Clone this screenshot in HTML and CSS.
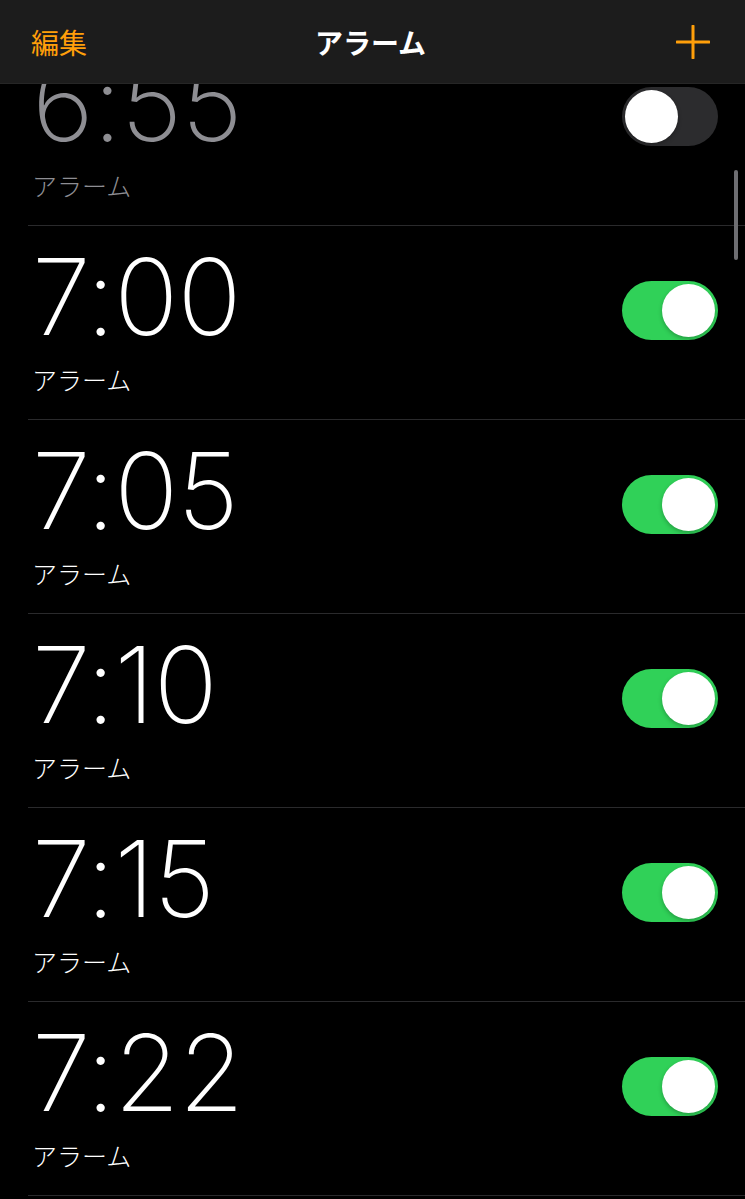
FILE: index.html
```html
<!DOCTYPE html>
<html>
	<head>
		<meta charset="utf-8" />
		<meta name="viewport" content="width=device-width, initial-scale=1">
		<title>アラーム</title>
		<link rel="stylesheet" href="styles.css">
	</head>
	<body>

		<div class="navbar">
			<span class="nav-edit">編集</span>
			<span class="nav-title">アラーム</span>
			<span class="nav-add">
				<svg width="34" height="34" viewBox="0 0 34 34">
					<path d="M17 1V33M1 17H33" stroke="#ff9f0a" stroke-width="3" stroke-linecap="round" fill="none" />
				</svg>
			</span>
		</div>

		<div class="scrollbar"></div>

		<ul class="alarms">
			<li class="alarm off">
				<div class="info">
					<div class="time">6:55</div>
					<div class="label">アラーム</div>
				</div>
				<div class="switch"><div class="knob"></div></div>
			</li>
			<li class="alarm">
				<div class="info">
					<div class="time">7:00</div>
					<div class="label">アラーム</div>
				</div>
				<div class="switch on"><div class="knob"></div></div>
			</li>
			<li class="alarm">
				<div class="info">
					<div class="time">7:05</div>
					<div class="label">アラーム</div>
				</div>
				<div class="switch on"><div class="knob"></div></div>
			</li>
			<li class="alarm">
				<div class="info">
					<div class="time">7:10</div>
					<div class="label">アラーム</div>
				</div>
				<div class="switch on"><div class="knob"></div></div>
			</li>
			<li class="alarm">
				<div class="info">
					<div class="time">7:15</div>
					<div class="label">アラーム</div>
				</div>
				<div class="switch on"><div class="knob"></div></div>
			</li>
			<li class="alarm">
				<div class="info">
					<div class="time">7:22</div>
					<div class="label">アラーム</div>
				</div>
				<div class="switch on"><div class="knob"></div></div>
			</li>
		</ul>

	</body>
</html>
```

FILE: styles.css
```css
body {
	margin: 0;
	padding: 0;
	background-color: #000;
	color: #fff;
	font-family: "Inter", "Noto Sans CJK JP", sans-serif;
	overflow: hidden;
}

ul,
li {
	list-style: none;
	margin: 0;
	padding: 0;
}

/* 顶部导航, 盖在列表上面 */
.navbar {
	position: fixed;
	top: 0;
	left: 0;
	right: 0;
	z-index: 2;
	height: 84px;
	background-color: #1c1c1c;
	border-bottom: 1px solid #262626;
	box-sizing: border-box;

	display: grid;
	grid-template-columns: 1fr auto 1fr;
	align-items: center;
	padding: 0 35px 0 31px;
}

.nav-edit {
	font-family: "Noto Sans CJK JP", sans-serif;
	font-size: 28px;
	color: #ff9f0a;
}

.nav-title {
	font-family: "Noto Sans CJK JP", sans-serif;
	font-size: 28px;
	font-weight: 700;
}

.nav-add {
	display: flex;
	justify-content: flex-end;
}

.scrollbar {
	position: fixed;
	top: 170px;
	right: 7px;
	z-index: 2;
	width: 4px;
	height: 90px;
	border-radius: 2px;
	background-color: #6e6e72;
}

.alarms {
	padding-top: 32px;
}

.alarm {
	margin-left: 28px;
	height: 194px;
	box-sizing: border-box;
	border-bottom: 1px solid #2a2a2c;

	display: flex;
	align-items: flex-start;
	justify-content: space-between;
	padding: 0 27px 0 4px;
}

.info {
	padding-top: 17px;
}

.time {
	font-family: "Inter", sans-serif;
	font-weight: 200;
	font-size: 106px;
	line-height: 108px;
	letter-spacing: -1px;
}

.label {
	font-family: "Noto Sans CJK JP", sans-serif;
	font-weight: 300;
	font-size: 25px;
	line-height: 36px;
	margin-top: 10px;
}

.alarm.off .time,
.alarm.off .label {
	color: #8e8e93;
}

.switch {
	width: 96px;
	height: 59px;
	border-radius: 30px;
	background-color: #2c2c2e;
	box-sizing: border-box;
	padding: 3px;
	display: flex;
	margin-top: 55px;
}

.switch.on {
	background-color: #30d158;
	justify-content: flex-end;
}

.knob {
	width: 53px;
	height: 53px;
	border-radius: 50%;
	background-color: #fff;
	box-shadow: 0 2px 4px rgba(0, 0, 0, 0.25);
}
```
